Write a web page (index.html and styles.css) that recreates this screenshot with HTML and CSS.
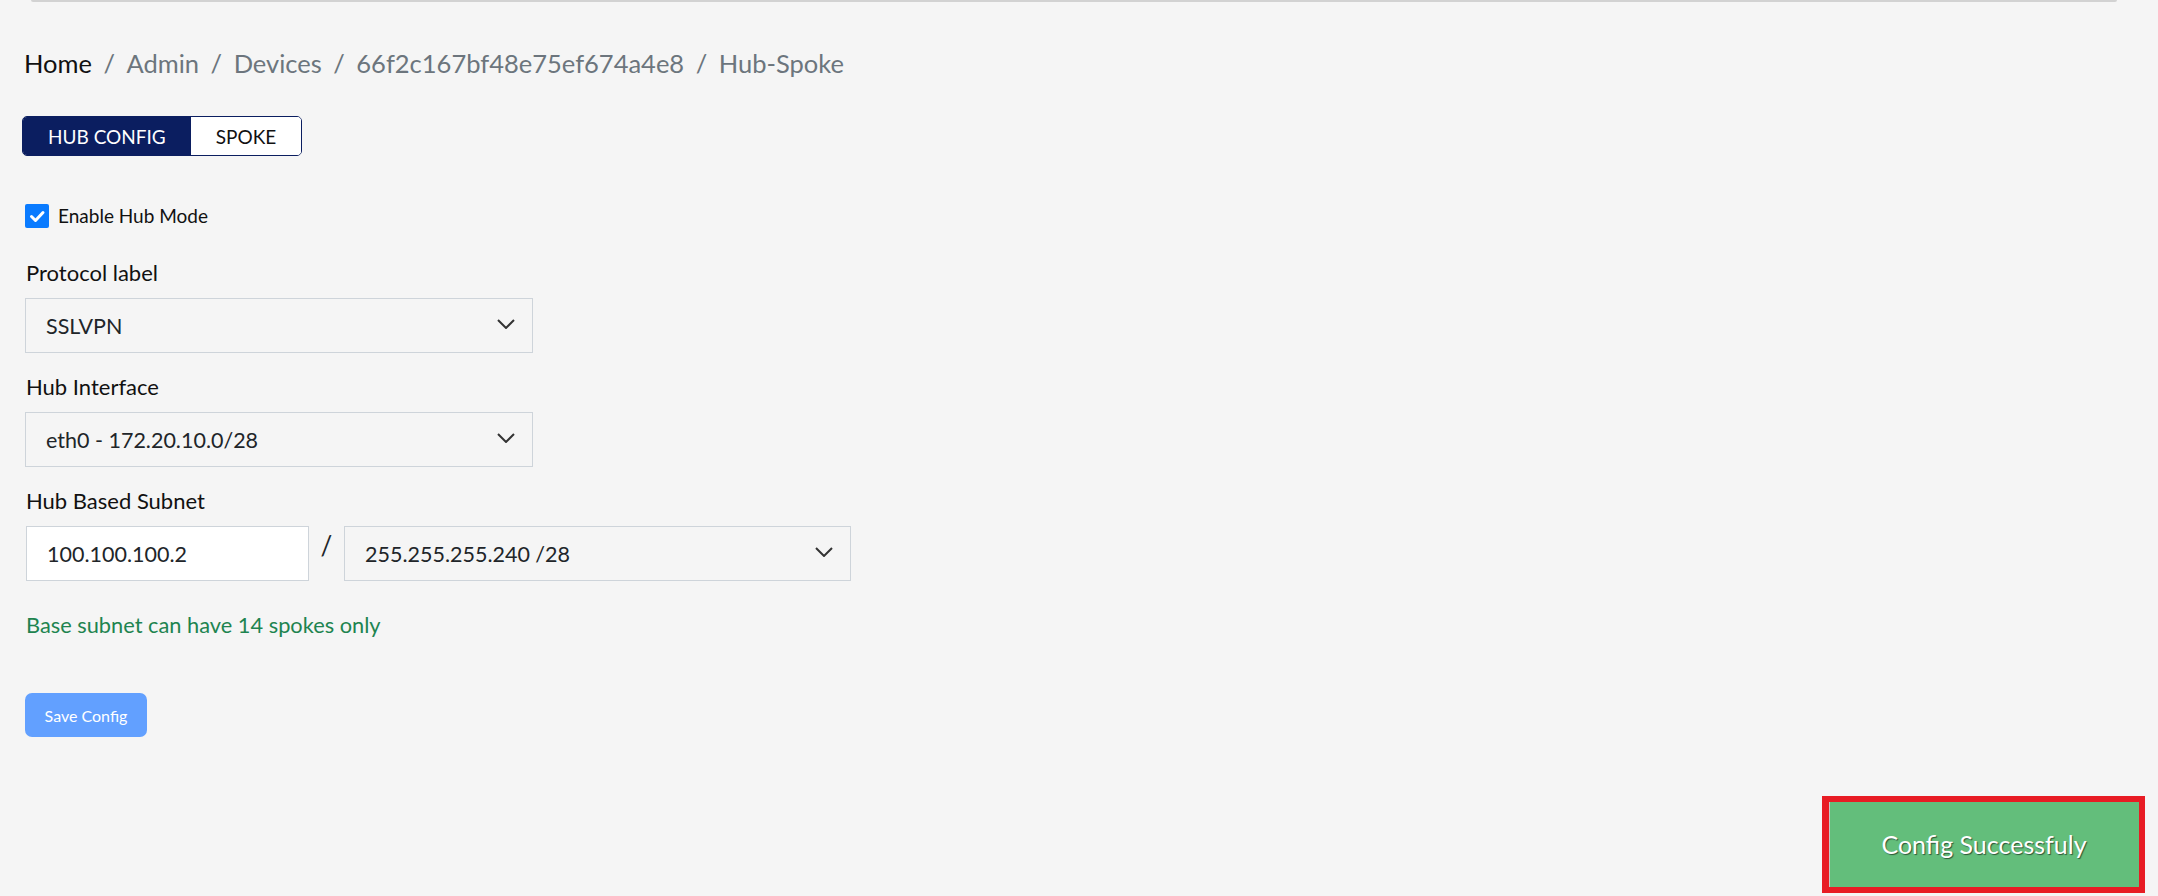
FILE: index.html
```html
<!DOCTYPE html>
<html lang="en">
<head>
  <meta charset="UTF-8"/>
  <meta name="viewport" content="width=device-width, initial-scale=1.0"/>
  <title>Hub-Spoke - Devices</title>
  <link rel="stylesheet" href="styles.css">
</head>
<body>

  <div class="topbar"></div>

  <main class="page">
    <nav class="breadcrumb">
      <span class="crumb active">Home</span>
      <span class="sep">/</span>
      <span class="crumb">Admin</span>
      <span class="sep">/</span>
      <span class="crumb">Devices</span>
      <span class="sep">/</span>
      <span class="crumb">66f2c167bf48e75ef674a4e8</span>
      <span class="sep">/</span>
      <span class="crumb">Hub-Spoke</span>
    </nav>

    <div class="tabs">
      <button class="tab selected">HUB CONFIG</button>
      <button class="tab">SPOKE</button>
    </div>

    <label class="check-row">
      <span class="check-box">
        <svg width="24" height="24" viewBox="0 0 24 24"><path d="M6.5 12.5 L10.5 16.5 L18 8.5" fill="none" stroke="#fff" stroke-width="3" stroke-linecap="round" stroke-linejoin="round"/></svg>
      </span>
      Enable Hub Mode
    </label>

    <label class="field-label">Protocol label</label>
    <div class="select-wrap">
      <select class="field">
        <option>SSLVPN</option>
      </select>
      <svg class="chevron" width="18" height="10" viewBox="0 0 18 10"><path d="M1 1 L9 9 L17 1" fill="none" stroke="#333" stroke-width="2"/></svg>
    </div>

    <label class="field-label">Hub Interface</label>
    <div class="select-wrap">
      <select class="field">
        <option>eth0 - 172.20.10.0/28</option>
      </select>
      <svg class="chevron" width="18" height="10" viewBox="0 0 18 10"><path d="M1 1 L9 9 L17 1" fill="none" stroke="#333" stroke-width="2"/></svg>
    </div>

    <label class="field-label">Hub Based Subnet</label>
    <div class="subnet-row">
      <input class="field ip" type="text" value="100.100.100.2"/>
      <span class="slash">/</span>
      <div class="select-wrap mask">
        <select class="field">
          <option>255.255.255.240 /28</option>
        </select>
        <svg class="chevron" width="18" height="10" viewBox="0 0 18 10"><path d="M1 1 L9 9 L17 1" fill="none" stroke="#333" stroke-width="2"/></svg>
      </div>
    </div>

    <p class="hint">Base subnet can have 14 spokes only</p>

    <button class="save">Save Config</button>
  </main>

  <div class="toast">Config Successfuly</div>

</body>
</html>
```

FILE: styles.css
```css
body {
  background: #f5f5f5;
  font-family: Lato, 'Open Sans', sans-serif;
  color: #212529;
  margin: 0;
}
.topbar {
  margin: 0 41px 0 31px;
  height: 0;
  border-bottom: 2px solid #d2d2d2;
  border-radius: 0 0 6px 6px;
}
.page {
  padding: 0 25px;
}
.breadcrumb {
  margin-top: 46px;
  font-size: 25.5px;
  line-height: 30px;
  color: #6c757d;
  display: flex;
  gap: 11.5px;
  margin-left: -1px;
}
.crumb.active {
  color: #111;
}
.tabs {
  margin-top: 38px;
  display: inline-flex;
  border: 1px solid #0b1e60;
  border-radius: 5px;
  overflow: hidden;
  margin-left: -3px;
}
.tab {
  font-family: inherit;
  font-size: 19px;
  height: 38px;
  padding: 0 25px;
  border: none;
  background: #fff;
  color: #111;
  cursor: pointer;
}
.tab.selected {
  background: #0b1e60;
  color: #fff;
}
.check-row {
  display: flex;
  align-items: center;
  gap: 9px;
  margin-top: 46px;
  font-size: 19px;
  line-height: 27px;
  color: #111;
}
.check-box {
  width: 24px;
  height: 24px;
  background: #0a7bff;
  border-radius: 2px;
  display: flex;
}
.field-label {
  display: block;
  margin-top: 28px;
  font-size: 22px;
  line-height: 32px;
  color: #111;
  margin-left: 1px;
}
.select-wrap {
  position: relative;
  width: 508px;
  margin-top: 9px;
}
.field {
  width: 100%;
  height: 55px;
  box-sizing: border-box;
  border: 1px solid #ced4da;
  background: #f5f5f5;
  font-family: inherit;
  font-size: 21.5px;
  color: #212529;
  padding: 0 20px;
  appearance: none;
  -webkit-appearance: none;
  border-radius: 0;
  outline: none;
}
.chevron {
  position: absolute;
  right: 18px;
  top: 21px;
  pointer-events: none;
}
.select-wrap + .field-label {
  margin-top: 18px;
}
.subnet-row {
  display: flex;
  align-items: flex-start;
  margin-top: 9px;
}
.field.ip {
  width: 283px;
  background: #fff;
  margin-left: 1px;
}
.slash {
  width: 35px;
  text-align: center;
  font-size: 26px;
  line-height: 55px;
  margin-top: -8px;
}
.select-wrap.mask {
  margin-top: 0;
  width: 507px;
}
.hint {
  margin: 28px 0 0 1px;
  font-size: 21.8px;
  line-height: 32px;
  color: #1e8450;
}
.save {
  margin-top: 52px;
  width: 122px;
  height: 44px;
  border: none;
  border-radius: 7px;
  background: #62a0ff;
  color: #fff;
  font-family: inherit;
  font-size: 16px;
  cursor: pointer;
}
.toast {
  position: fixed;
  right: 13px;
  bottom: 3px;
  width: 323px;
  height: 97px;
  box-sizing: border-box;
  border: 6px solid #e81c24;
  border-left-width: 7px;
  background: #63be7b;
  box-shadow: inset 1px 0 0 #c8c8c8;
  color: #fff;
  font-size: 25px;
  display: flex;
  align-items: center;
  justify-content: center;
  padding-bottom: 2px;
  text-shadow: 1px 1px 1px rgba(0,0,0,0.55);
}
```
